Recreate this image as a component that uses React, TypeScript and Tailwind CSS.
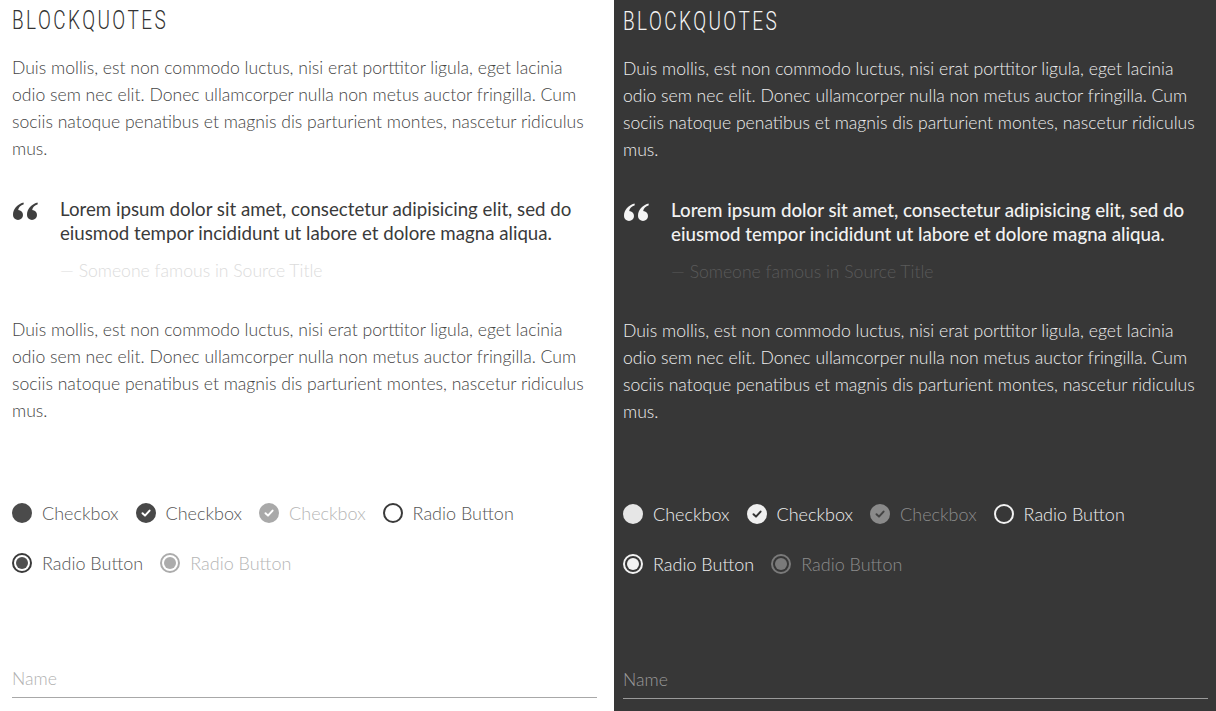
import React from "react";

const body =
  "Duis mollis, est non commodo luctus, nisi erat porttitor ligula, eget lacinia odio sem nec elit. Donec ullamcorper nulla non metus auctor fringilla. Cum sociis natoque penatibus et magnis dis parturient montes, nascetur ridiculus mus.";

type Kind = "check" | "checked" | "checkedOff" | "radio" | "radioOn" | "radioOff";

// one comma-like quote stroke, ball at the bottom, tail up to the right
const QUOTE_D = "M11.5 0.5 C5 2.5 1 7 1 13 A5 5 0 0 0 11 13 A5 5 0 0 0 6.2 8 C6.6 5.2 8.6 3.2 11.8 2.2 Z";

function QuoteMark({ dark }: { dark: boolean }) {
  const fill = dark ? "#f4f4f4" : "#3f3f3f";
  return (
    <svg width="27" height="19" viewBox="0 0 27 19" className="mt-[5px]">
      <path d={QUOTE_D} fill={fill} />
      <path d={QUOTE_D} fill={fill} transform="translate(14 0)" />
    </svg>
  );
}

function Mark({ kind, dark }: { kind: Kind; dark: boolean }) {
  if (kind === "check") {
    return <span className={`block h-5 w-5 rounded-full ${dark ? "bg-[#e6e6e6]" : "bg-[#4b4b4b]"}`} />;
  }
  if (kind === "checked" || kind === "checkedOff") {
    const off = kind === "checkedOff";
    const bg = dark ? (off ? "bg-[#8a8a8a]" : "bg-[#efefef]") : off ? "bg-[#a9a9a9]" : "bg-[#484848]";
    const stroke = dark ? (off ? "#444" : "#333") : "#fff";
    return (
      <span className={`flex h-5 w-5 items-center justify-center rounded-full ${bg}`}>
        <svg width="12" height="12" viewBox="0 0 12 12" fill="none">
          <path d="M2.5 6.2 L5 8.6 L9.6 3.6" stroke={stroke} strokeWidth="2" strokeLinecap="round" strokeLinejoin="round" />
        </svg>
      </span>
    );
  }
  if (kind === "radio") {
    return <span className={`block h-5 w-5 rounded-full border-2 ${dark ? "border-[#f2f2f2]" : "border-[#3a3a3a]"}`} />;
  }
  const off = kind === "radioOff";
  const ring = dark ? (off ? "border-[#7a7a7a]" : "border-[#f2f2f2]") : off ? "border-[#acacac]" : "border-[#3a3a3a]";
  const dot = dark ? (off ? "bg-[#7a7a7a]" : "bg-[#f2f2f2]") : off ? "bg-[#acacac]" : "bg-[#4f4f4f]";
  return (
    <span className={`flex h-5 w-5 items-center justify-center rounded-full border-2 ${ring}`}>
      <span className={`block h-3 w-3 rounded-full ${dot}`} />
    </span>
  );
}

function Option({ kind, label, dark }: { kind: Kind; label: string; dark: boolean }) {
  const off = kind === "checkedOff" || kind === "radioOff";
  const color = dark ? (off ? "text-[#8c8c8c]" : "text-[#efefef]") : off ? "text-[#b5b5b5]" : "text-[#555]";
  return (
    <label className="flex items-center gap-[10px]">
      <Mark kind={kind} dark={dark} />
      <span className={`text-[18px] font-light ${color}`}>{label}</span>
    </label>
  );
}

function Panel({ dark }: { dark: boolean }) {
  return (
    <section
      className={
        dark
          ? "flex-1 bg-[#373737] pl-[9px] pr-2 pt-px text-[#eee]"
          : "w-[614px] shrink-0 bg-white pl-3 pr-[17px] text-[#444]"
      }
    >
      {/* Heading */}
      <h2
        className={`pt-[5px] text-[25px] font-light leading-[32px] ${dark ? "text-[#f4f4f4]" : "text-[#333]"}`}
        style={{ fontFamily: "Roboto, sans-serif" }}
      >
        <span className="inline-block origin-left scale-x-[0.76] tracking-[3.2px]">BLOCKQUOTES</span>
      </h2>

      <p className="mt-[17px] text-[17.6px] font-light leading-[27px]">{body}</p>

      {/* Blockquote */}
      <blockquote className="mt-[35px] flex">
        <div className="w-12 shrink-0">
          <QuoteMark dark={dark} />
        </div>
        <div>
          <p className={`text-[18.7px] leading-[24px] ${dark ? "font-medium text-[#f2f2f2]" : "font-normal text-[#3a3a3a]"}`}>
            Lorem ipsum dolor sit amet, consectetur adipisicing elit, sed do eiusmod tempor incididunt ut labore et dolore
            magna aliqua.
          </p>
          <cite className={`mt-[14px] block text-[17.6px] font-light not-italic leading-[24px] ${dark ? "text-[#5a5a5a]" : "text-[#dcdcdc]"}`}>
            — Someone famous in Source Title
          </cite>
        </div>
      </blockquote>

      <p className="mt-[33px] text-[17.6px] font-light leading-[27px]">{body}</p>

      {/* Checkboxes & radios */}
      <div className="mt-[74px] flex h-[30px] items-center gap-[17px]">
        <Option kind="check" label="Checkbox" dark={dark} />
        <Option kind="checked" label="Checkbox" dark={dark} />
        <Option kind="checkedOff" label="Checkbox" dark={dark} />
        <Option kind="radio" label="Radio Button" dark={dark} />
      </div>
      <div className="mt-5 flex h-[30px] items-center gap-[17px]">
        <Option kind="radioOn" label="Radio Button" dark={dark} />
        <Option kind="radioOff" label="Radio Button" dark={dark} />
      </div>

      {/* Input */}
      <div className={`mt-[89px] border-b pb-[6px] ${dark ? "border-[#9a9a9a]" : "border-[#a8a8a8]"}`}>
        <input
          placeholder="Name"
          className={`w-full bg-transparent text-[17.6px] font-light leading-[24px] outline-none ${
            dark ? "placeholder:text-[#9a9a9a]" : "placeholder:text-[#b0b0b0]"
          }`}
        />
      </div>
    </section>
  );
}

export default function App() {
  return (
    <div className="flex min-h-[711px] overflow-hidden" style={{ fontFamily: "Lato, 'Open Sans', sans-serif" }}>
      <Panel dark={false} />
      <Panel dark />
    </div>
  );
}
